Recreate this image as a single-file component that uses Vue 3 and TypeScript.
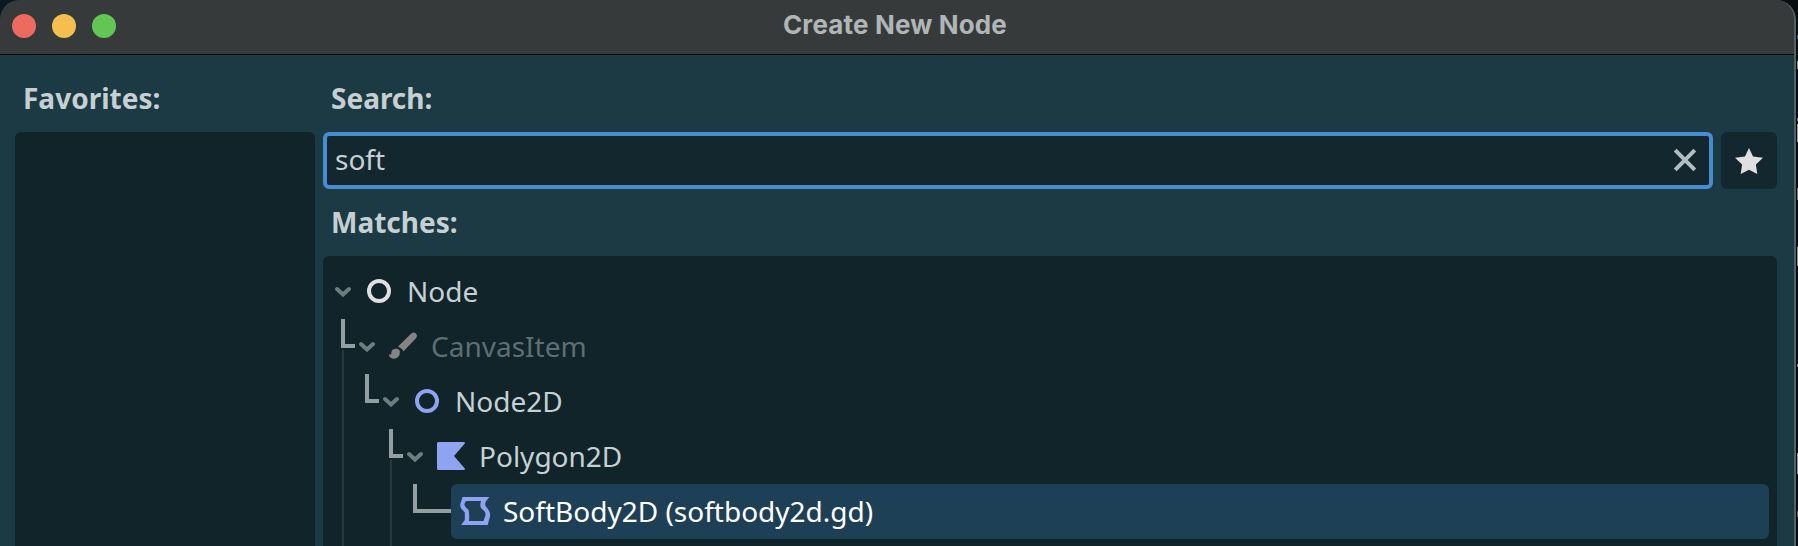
<script setup lang="ts">
type IconName = 'ring' | 'brush' | 'polygon' | 'soft'

interface TreeNode {
  label: string
  icon: IconName
  color: string
  muted?: boolean
  leaf?: boolean
}

const nodes: TreeNode[] = [
  { label: 'Node', icon: 'ring', color: '#e0e0e0' },
  { label: 'CanvasItem', icon: 'brush', color: '#858484', muted: true },
  { label: 'Node2D', icon: 'ring', color: '#8fa3f0' },
  { label: 'Polygon2D', icon: 'polygon', color: '#8fa3f0' },
  { label: 'SoftBody2D (softbody2d.gd)', icon: 'soft', color: '#8fa3f0', leaf: true },
]
</script>

<template>
  <div class="desktop">
    <div class="window">
      <header class="titlebar">
        <div class="lights"><i class="red"></i><i class="yellow"></i><i class="green"></i></div>
        <h1>Create New Node</h1>
      </header>
      <main class="content">
        <section class="favorites">
          <h2>Favorites:</h2>
          <div class="panel"></div>
        </section>
        <section class="results">
          <h2>Search:</h2>
          <div class="search-row">
            <div class="field">
              <span>soft</span>
              <svg class="clear" width="24" height="24" viewBox="0 0 24 24">
                <path d="M2.2 2.2 21.8 21.8M21.8 2.2 2.2 21.8" fill="none" stroke="#b1bec1" stroke-width="4" />
              </svg>
            </div>
            <div class="star">
              <svg width="28" height="28" viewBox="0 0 28 28">
                <path d="M14 1 18 9.4 28 10.8 20.9 17.6 22.3 27 14 22.7 5.7 27 7.1 17.6 0 10.8 10 9.4Z" fill="#e0e0e0" />
              </svg>
            </div>
          </div>
          <h2 class="matches">Matches:</h2>
          <div class="panel tree">
            <div
              v-for="(node, depth) in nodes"
              :key="node.label"
              class="row"
              :style="{ paddingLeft: depth * 24 + 'px' }"
            >
              <svg v-if="depth > 0" class="branch" :width="node.leaf ? 38 : 14" height="29" :style="{ left: depth * 24 - 18 + 'px' }">
                <path :d="node.leaf ? 'M2 0V27H38' : 'M2 0V27H14'" fill="none" stroke="#929e9f" stroke-width="4" />
              </svg>
              <svg class="arrow" width="16" height="12" viewBox="0 0 16 12">
                <path v-if="!node.leaf" d="M2 3 8 8.5 14 3" fill="none" stroke="#6d7d80" stroke-width="4" stroke-linecap="round" />
              </svg>
              <div class="item" :class="{ selected: node.leaf, muted: node.muted }">
                <svg class="icon" width="32" height="32" viewBox="0 0 32 32" :fill="node.color">
                  <circle v-if="node.icon === 'ring'" cx="16" cy="16" r="10" fill="none" :stroke="node.color" stroke-width="4" />
                  <template v-else-if="node.icon === 'brush'">
                    <path d="M24.6 3.2C27.4 .8 31.6 4.6 29.2 7.9L16.6 21.2Q14.5 18.2 11 16.5Z" />
                    <path d="M9.8 18.8C13 19.4 13.2 21.2 12.6 24.6C11.6 28.8 6.4 29.8 3.4 27.4C2.2 26.6 1.8 25.4 2.1 24.4C4.2 25 4.4 23.8 4.4 22.2C4.6 19.6 7 18.3 9.8 18.8Z" />
                  </template>
                  <path v-else-if="node.icon === 'polygon'" d="M3.5 2H29A1 1 0 0 1 29.6 3.8L19 16 29.6 28.2A1 1 0 0 1 29 30H3.5A1.5 1.5 0 0 1 2 28.5V3.5A1.5 1.5 0 0 1 3.5 2Z" />
                  <path v-else fill-rule="evenodd" d="M3.5 2H30.3L27.2 6Q25.5 8.6 26.6 11L29.6 15Q32 19 30.6 23L29.6 26.5L28.8 30H2L5.8 25V17.5L2.2 13.5Q0.4 10.5 1.8 7.5L2.8 4.5Q3.2 3.3 3.5 2ZM7 6 5.7 8.2Q5 10.4 6.5 12L9.6 15Q10.7 20.5 10 26H24.5L26.4 20.5Q27 18.5 25.6 16.5L22 13Q20.5 9.5 22.2 6Z" />
                </svg>
                <span>{{ node.label }}</span>
              </div>
            </div>
            <i class="guide first"></i>
            <i class="guide second"></i>
          </div>
        </section>
      </main>
    </div>
  </div>
</template>

<style>
body { margin: 0; overflow: hidden; }
</style>

<style scoped>
* { box-sizing: border-box; }
.desktop {
  width: 1798px;
  height: 546px;
  overflow: hidden;
  background:
    linear-gradient(#0000 35px, #2d5a7d 35px 39px, #0000 39px 61px, #8d8d8a 61px 69px, #0000 69px 118px, #777 118px 121px, #0000 121px 124px, #a59e9c 124px 142px, #0000 142px 188px, #7e8480 188px 200px, #0000 200px 247px, #8c8c89 247px 266px, #0000 266px 364px, #888 364px 367px, #0000 367px 453px, #999 453px 474px, #0000 474px 511px, #59635f 511px 517px, #0000 517px) right / 1px 100% no-repeat,
    linear-gradient(90deg, #0a1a20 50%, #080e0f 50%);
  font-family: "Noto Sans", sans-serif;
  font-size: 28px;
  color: #c6d0d2;
}
.window {
  width: 1796px;
  height: 580px;
  border-right: 2px solid #536064;
  border-radius: 20px 20px 0 0;
  background: #1c3a43;
  overflow: hidden;
}
.titlebar {
  position: relative;
  display: flex;
  align-items: center;
  justify-content: center;
  height: 55px;
  padding: 0 4px 5px 0;
  background: #363a3a;
  border-bottom: 1px solid #000;
}
.titlebar h1 {
  margin: 0;
  font: 700 26px/32px Inter, sans-serif;
  letter-spacing: 0.15px;
  color: #b0b5b5;
}
.lights { position: absolute; left: 12px; top: 14px; display: flex; gap: 16px; }
.lights i { width: 24px; height: 24px; border-radius: 50%; }
.red { background: #ed6a5f; }
.yellow { background: #f5bf50; }
.green { background: #62c655; }
.content { display: flex; gap: 8px; height: 525px; padding: 24px 17px 0 15px; }
section { display: flex; flex-direction: column; }
.favorites { width: 300px; }
.results { flex: 1; }
h2 { margin: 0 0 15px; padding-left: 8px; font-size: 28px; line-height: 38px; font-weight: 700; color: #c6d0d2; }
h2.matches { margin: 14px 0 15px; }
.panel { flex: 1; border-radius: 6px 6px 0 0; background: #10242a; }
.search-row { display: flex; gap: 8px; height: 57px; }
.field {
  flex: 1;
  display: flex;
  align-items: center;
  justify-content: space-between;
  padding: 0 12px 3px 8px;
  border: 4px solid #478bd0;
  border-radius: 6px;
  background: #12282e;
}
.field .clear { margin-top: 2px; }
.star { width: 56px; display: flex; align-items: center; justify-content: center; border-radius: 6px; background: #12282e; }
.tree { position: relative; padding: 8px 8px 0 12px; }
.row { position: relative; display: flex; align-items: center; height: 55px; }
.branch { position: absolute; top: 0; }
.arrow { flex: none; margin-top: 1px; }
.item { flex: 1; display: flex; align-items: center; height: 55px; margin-left: 4px; padding-left: 8px; border-radius: 6px; white-space: pre; }
.icon { flex: none; margin-bottom: 1px; }
.item span { margin-left: 12px; line-height: 38px; padding-bottom: 1px; }
.selected { background: #1e4057; color: #fff; }
.muted { color: #5f6e72; }
.guide { position: absolute; width: 2px; bottom: 0; background: #27393e; }
.first { left: 19px; top: 94px; }
.second { left: 67px; top: 204px; }
</style>
